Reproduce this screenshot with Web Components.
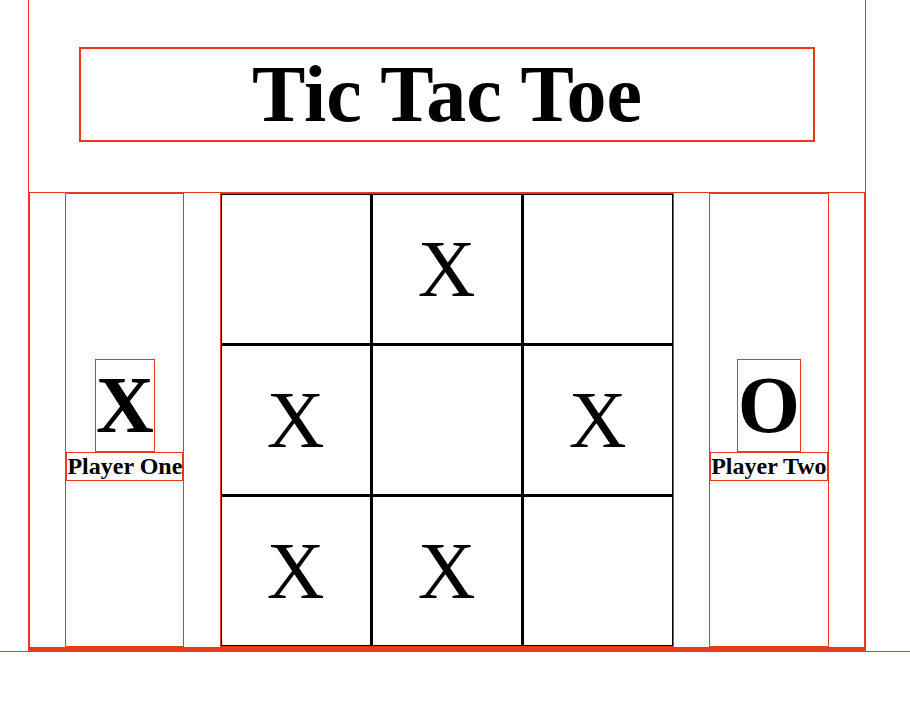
<!DOCTYPE html>
<html lang="en">
<head>
<meta charset="utf-8">
<title>Tic Tac Toe</title>
<style>
body { margin: 0; background: #fff; color: #000; font-family: "Liberation Serif", "Times New Roman", serif; --line: #e63a19; }
</style>
</head>
<body>
<game-app></game-app>
<script>
const define = (name, html, setup) => customElements.define(name, class extends HTMLElement {
  connectedCallback() {
    if (this.shadowRoot) return;
    const root = this.attachShadow({ mode: "open" });
    root.innerHTML = html;
    if (setup) setup(this, root);
  }
});

define("game-title", `
<style>
:host { display: block; padding: 47px 50px 50px; }
h1 { margin: 0; border: 2px solid var(--line); font-size: 80px; line-height: 91px; font-weight: bold; text-align: center; }
</style>
<h1><slot></slot></h1>`);

define("player-card", `
<style>
:host { display: flex; flex-direction: column; align-items: center; justify-content: center; border: 1px solid var(--line); font-weight: bold; }
.mark, .name { border: 1px solid var(--line); white-space: nowrap; }
.mark { font-size: 80px; line-height: 91px; }
.name { font-size: 24px; line-height: 27px; }
</style>
<div class="mark"><slot name="mark"></slot></div>
<div class="name"><slot></slot></div>`);

define("board-cell", `
<style>
:host { display: block; }
button { display: block; width: 100%; height: 148px; margin: 0; padding: 0; border: 0; border-radius: 0; background: #fff; color: inherit; font: 80px/91px "Liberation Serif", "Times New Roman", serif; cursor: pointer; }
</style>
<button type="button"></button>`, (host, root) => {
  const b = root.querySelector("button");
  const mark = host.getAttribute("mark") || "";
  b.textContent = mark;
  b.setAttribute("aria-label", mark || "Empty square");
});

define("game-board", `
<style>
:host { display: block; border: 1px solid var(--line); }
.grid { display: grid; grid-template-columns: repeat(3, 148px); gap: 3px; padding: 1px; background: #000; }
</style>
<div class="grid"></div>`, (host, root) => {
  const grid = root.querySelector(".grid");
  for (const mark of host.getAttribute("marks")) {
    const cell = document.createElement("board-cell");
    cell.setAttribute("mark", mark === "-" ? "" : mark);
    grid.append(cell);
  }
});

define("game-app", `
<style>
:host { display: block; padding: 0 44px 0 28px; border-bottom: 1px solid var(--line); }
.frame { border: solid var(--line); border-width: 0 1px 3px; }
main { display: flex; justify-content: space-evenly; border: 1px solid var(--line); }
</style>
<div class="frame">
  <game-title>Tic Tac Toe</game-title>
  <main>
    <player-card><span slot="mark">X</span>Player One</player-card>
    <game-board marks="-X-X-XXX-"></game-board>
    <player-card><span slot="mark">O</span>Player Two</player-card>
  </main>
</div>`);
</script>
</body>
</html>
